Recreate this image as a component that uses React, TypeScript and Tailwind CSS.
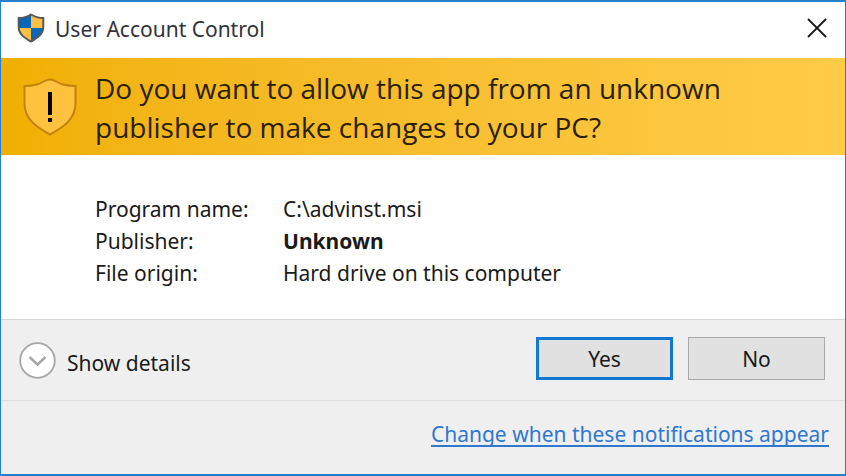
import { useState } from "react";

const details = [
  { label: "Program name:", value: "C:\\advinst.msi" },
  { label: "Publisher:", value: "Unknown", strong: true },
  { label: "File origin:", value: "Hard drive on this computer" },
];

function UacShield() {
  return (
    <svg className="w-7 h-[30px]" viewBox="0 0 28 30" aria-hidden="true">
      <defs>
        <clipPath id="shield">
          <path d="M14 1 C10 3.5 6 4.5 1.5 4.5 V14 C1.5 21.5 8 25.5 14 29 C20 25.5 26.5 21.5 26.5 14 V4.5 C22 4.5 18 3.5 14 1 Z" />
        </clipPath>
      </defs>
      <g clipPath="url(#shield)">
        <rect width="14" height="15" fill="#0c66b8" />
        <rect x="14" width="14" height="15" fill="#fdc045" />
        <rect y="15" width="14" height="15" fill="#fdc045" />
        <rect x="14" y="15" width="14" height="15" fill="#0c66b8" />
      </g>
      <path
        d="M14 1.5 C10 4 6 5 1.7 5 V14 C1.7 21.5 8 25 14 28.5 C20 25 26.3 21.5 26.3 14 V5 C22 5 18 4 14 1.5 Z"
        fill="none"
        stroke="#55585a"
        strokeWidth="2"
      />
    </svg>
  );
}

function WarningShield() {
  return (
    <svg className="w-[54px] h-[58px] shrink-0" viewBox="0 0 54 58" aria-hidden="true">
      <path
        d="M27 1.5 C22 1.5 20 5 14 6.5 C10 7.5 6 8 1.5 8 V25 C1.5 41 13 49 27 56.5 C41 49 52.5 41 52.5 25 V8 C48 8 44 7.5 40 6.5 C34 5 32 1.5 27 1.5 Z"
        fill="#ffc23e"
        stroke="#c2830c"
        strokeWidth="2"
      />
      <rect x="25" y="14" width="4" height="23" fill="#000" />
      <rect x="25" y="40" width="4" height="4" fill="#000" />
    </svg>
  );
}

export default function App() {
  const [expanded, setExpanded] = useState(false);

  return (
    <main className="min-h-screen flex flex-col border-x border-y-2 border-[#2480cd] bg-white font-['Noto_Sans','Open_Sans',sans-serif] text-[21px] leading-8 text-[#1a1a1a]">
      <header className="flex items-center h-14 pb-1 pl-4 pr-[18px]">
        <UacShield />
        <h1 className="ml-2.5 pt-0.5 flex-1 text-[#33333b]">User Account Control</h1>
        <button type="button" aria-label="Close">
          <svg className="w-5 h-5" viewBox="0 0 20 20" aria-hidden="true">
            <path d="M1 1 L19 19 M19 1 L1 19" stroke="#1a1a1a" strokeWidth="1.8" />
          </svg>
        </button>
      </header>

      <section className="flex items-center gap-[18px] px-[22px] py-2 bg-linear-to-r from-[#f0b000] to-[#ffcc47]">
        <WarningShield />
        <h2 className="pt-[3px] font-['Open_Sans','Noto_Sans',sans-serif] text-[28px] leading-[39px] text-[#2b2000]">
          Do you want to allow this app from an unknown
          <br />
          publisher to make changes to your PC?
        </h2>
      </section>

      <dl className="grow grid grid-cols-[188px_1fr] content-start px-[94px] pt-[38px] pb-[29px]">
        {details.map((item) => (
          <div key={item.label} className="contents">
            <dt>{item.label}</dt>
            <dd className={item.strong ? "font-bold" : ""}>{item.value}</dd>
          </div>
        ))}
      </dl>

      <div className="flex items-start justify-between h-[81px] pt-[17px] pl-[18px] pr-5 border-t border-[#d5d5d5] bg-[#efefef]">
        <button
          type="button"
          aria-expanded={expanded}
          onClick={() => setExpanded(!expanded)}
          className="flex items-center gap-[11px] pt-[5px]"
        >
          <svg className="w-[37px] h-[37px]" viewBox="0 0 37 37" aria-hidden="true">
            <circle cx="18.5" cy="18.5" r="17.3" fill="#fff" stroke="#a6a6a6" strokeWidth="1.8" />
            <path d="M10.5 15 L18.5 22.5 L26.5 15" fill="none" stroke="#a6a6a6" strokeWidth="2.4" />
          </svg>
          <span className="pt-1">Show details</span>
        </button>
        <div className="flex gap-[15px]">
          <button type="button" className="w-[137px] h-[43px] border-3 border-[#1177d1] bg-[#e1e1e1]">
            Yes
          </button>
          <button type="button" className="w-[137px] h-[43px] border border-[#a9a9a9] bg-[#e1e1e1]">
            No
          </button>
        </div>
      </div>

      <footer className="flex items-start justify-end h-[74px] pt-[17px] px-4 border-t border-[#dcdcdc] bg-[#efefef]">
        <a
          href="#notifications"
          className="text-[#2f78cf] underline decoration-2 underline-offset-3 [text-decoration-skip-ink:none]"
        >
          Change when these notifications appear
        </a>
      </footer>
    </main>
  );
}
